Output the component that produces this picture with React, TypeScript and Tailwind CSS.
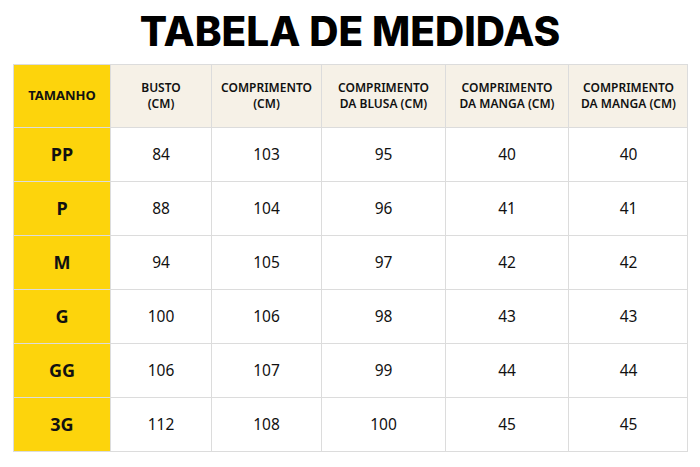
const headers = [
  ["BUSTO", "(CM)"],
  ["COMPRIMENTO", "(CM)"],
  ["COMPRIMENTO", "DA BLUSA (CM)"],
  ["COMPRIMENTO", "DA MANGA (CM)"],
  ["COMPRIMENTO", "DA MANGA (CM)"],
];

const rows: [string, number[]][] = [
  ["PP", [84, 103, 95, 40, 40]],
  ["P", [88, 104, 96, 41, 41]],
  ["M", [94, 105, 97, 42, 42]],
  ["G", [100, 106, 98, 43, 43]],
  ["GG", [106, 107, 99, 44, 44]],
  ["3G", [112, 108, 100, 45, 45]],
];

const cols = "grid-cols-[96px_101px_110px_124px_123px_120px]";

export default function App() {
  return (
    <div className="w-[700px] h-[467px] bg-white font-['Noto_Sans',sans-serif] text-[#111]">
      <h1 className="pt-[8px] h-[64px] text-center font-['Inter',sans-serif] font-extrabold text-[40.5px] leading-[48px] text-black">
        TABELA DE MEDIDAS
      </h1>
      <div className="ml-[13px] w-[675px] border border-[#dcdcdc]">
        <div className={`grid ${cols} h-[62px] bg-[#f6f1e7]`}>
          <div className="flex items-center justify-center bg-[#fdd40c] text-[13px] font-bold">
            TAMANHO
          </div>
          {headers.map((h, i) => (
            <div
              key={i}
              className="flex flex-col items-center justify-center border-l border-[#dcdcdc] text-[12px] font-semibold leading-[16px] text-center"
            >
              <span>{h[0]}</span>
              <span>{h[1]}</span>
            </div>
          ))}
        </div>
        {rows.map(([size, vals]) => (
          <div key={size} className={`grid ${cols} h-[54px] border-t border-[#dcdcdc]`}>
            <div className="flex items-center justify-center bg-[#fdd40c] text-[18px] font-bold">
              {size}
            </div>
            {vals.map((v, i) => (
              <div
                key={i}
                className="flex items-center justify-center border-l border-[#dcdcdc] text-[15.5px]"
              >
                {v}
              </div>
            ))}
          </div>
        ))}
      </div>
    </div>
  );
}
